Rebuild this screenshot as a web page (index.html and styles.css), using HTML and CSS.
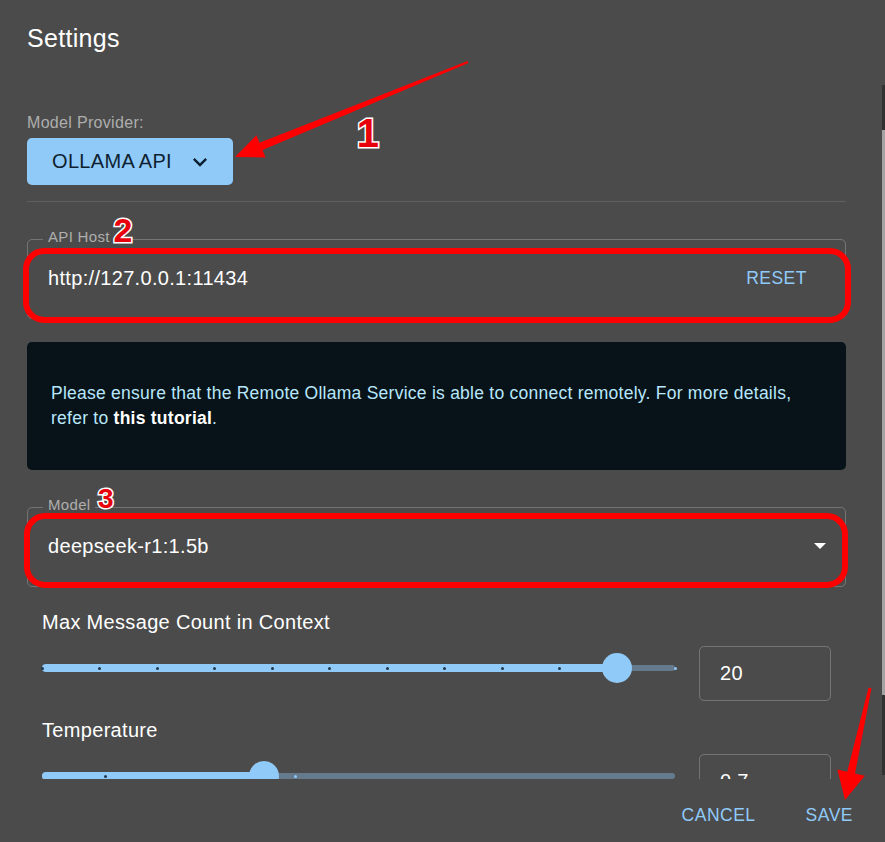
FILE: index.html
```html
<!DOCTYPE html>
<html lang="en">
    <head>
        <meta charset="UTF-8" />
        <meta name="viewport" content="width=device-width, initial-scale=1.0" />
        <title>Settings</title>
        <link rel="stylesheet" href="styles.css">
    </head>
    <body>
        <div class="dialog">
            <h2 class="dialog-title">Settings</h2>

            <div class="dialog-content">
                <!-- Provider picker -->
                <div class="field-caption">Model Provider:</div>
                <button class="provider-btn">
                    <span>OLLAMA API</span>
                    <svg width="28" height="28" viewBox="0 0 24 24"><path d="M16.59 8.59 12 13.17 7.41 8.59 6 10l6 6 6-6z" fill="currentColor"/></svg>
                </button>

                <hr class="divider">

                <fieldset class="outlined">
                    <legend>API Host</legend>
                    <div class="field-inner host-inner">
                        <span class="value">http://127.0.0.1:11434</span>
                        <button class="text-btn">RESET</button>
                    </div>
                </fieldset>

                <div class="alert">
                    <p>Please ensure that the Remote Ollama Service is able to connect remotely. For more details, refer to <b>this tutorial</b>.</p>
                </div>

                <fieldset class="outlined">
                    <legend>Model</legend>
                    <div class="field-inner model-inner">
                        <span class="value">deepseek-r1:1.5b</span>
                        <span class="caret"></span>
                    </div>
                </fieldset>

                <!-- Sliders -->
                <div class="slider-block first">
                    <div class="slider-label">Max Message Count in Context</div>
                    <div class="slider-row">
                        <div class="slider">
                            <div class="rail"></div>
                            <div class="track" style="width: 90.91%"></div>
                            <span class="mark active" style="left: 0%"></span>
                            <span class="mark active" style="left: 9.09%"></span>
                            <span class="mark active" style="left: 18.18%"></span>
                            <span class="mark active" style="left: 27.27%"></span>
                            <span class="mark active" style="left: 36.36%"></span>
                            <span class="mark active" style="left: 45.45%"></span>
                            <span class="mark active" style="left: 54.55%"></span>
                            <span class="mark active" style="left: 63.64%"></span>
                            <span class="mark active" style="left: 72.73%"></span>
                            <span class="mark active" style="left: 81.82%"></span>
                            <span class="mark" style="left: 100%"></span>
                            <div class="thumb" style="left: 90.91%"></div>
                        </div>
                        <div class="num-input">20</div>
                    </div>
                </div>

                <div class="slider-block">
                    <div class="slider-label">Temperature</div>
                    <div class="slider-row">
                        <div class="slider">
                            <div class="rail"></div>
                            <div class="track" style="width: 35%"></div>
                            <span class="mark active" style="left: 10%"></span>
                            <span class="mark" style="left: 40%"></span>
                            <div class="thumb" style="left: 35%"></div>
                        </div>
                        <div class="num-input">0.7</div>
                    </div>
                </div>
            </div>

            <div class="dialog-actions">
                <button class="text-btn">CANCEL</button>
                <button class="text-btn">SAVE</button>
            </div>
        </div>

        <div class="scrollbar"><div class="scroll-thumb"></div></div>

        <!-- red markup drawn over the screenshot -->
        <svg class="annotations" width="885" height="842" viewBox="0 0 885 842">
            <rect x="26" y="251" width="822" height="69" rx="18" fill="none" stroke="#f00" stroke-width="6"/>
            <rect x="27" y="516" width="818" height="69" rx="18" fill="none" stroke="#f00" stroke-width="6"/>
            <polygon points="235,157 256.5,135.3 259.5,142.7 467.6,61 468.4,63 262.5,150.1 265.5,157.5" fill="#f00"/>
            <polygon points="845,800 837.4,769.6 847.2,771.8 868.5,687.7 871.5,688.3 855,773.6 864.8,775.8" fill="#f00"/>
            <text x="368" y="147" text-anchor="middle" class="num" font-size="40">1</text>
            <text x="123" y="242" text-anchor="middle" class="num" font-size="34">2</text>
            <text x="106" y="508" text-anchor="middle" class="num" font-size="28">3</text>
        </svg>
    </body>
</html>
```

FILE: styles.css
```css
body {
    font-family: "Liberation Sans", Arial, sans-serif;
    letter-spacing: 0.02em;
    margin: 0;
    width: 885px;
    height: 842px;
    overflow: hidden;
    position: relative;
    background-color: #4b4b4b;
    color: #fff;
}
.dialog {
    display: flex;
    flex-direction: column;
    height: 842px;
}
.dialog-title {
    margin: 0;
    height: 85px;
    box-sizing: border-box;
    padding: 22px 27px 0;
    font-size: 25px;
    font-weight: normal;
    line-height: 32px;
}
.dialog-content {
    height: 694px;
    overflow: hidden;
    padding: 0 39px 0 27px;
}
.field-caption {
    margin-top: 28px;
    font-size: 16px;
    line-height: 20px;
    color: #aeaeae;
}
.provider-btn {
    margin-top: 5px;
    height: 47px;
    display: inline-flex;
    align-items: center;
    gap: 14px;
    padding: 0 19px 0 25px;
    background-color: #90caf9;
    color: #0e1f30;
    border: none;
    border-radius: 5px;
    font-family: inherit;
    font-size: 20px;
    letter-spacing: inherit;
}
.provider-btn svg {
    display: block;
}
.divider {
    margin: 16px 0 0;
    border: none;
    border-top: 1px solid rgba(255,255,255,0.12);
}
.outlined {
    margin: 26px 0 0;
    padding: 0;
    min-width: 0;
    border: 1px solid rgba(255,255,255,0.23);
    border-radius: 5px;
}
.outlined legend {
    margin-left: 15px;
    padding: 0 5px 4px;
    font-size: 15px;
    line-height: 18px;
    color: #aeaeae;
}
.field-inner {
    display: flex;
    align-items: flex-start;
    height: 68px;
    box-sizing: border-box;
    padding: 16px 28px 0 20px;
}
.model-inner {
    padding-right: 19px;
}
.value {
    flex: 1;
    font-size: 20px;
    line-height: 24px;
}
.text-btn {
    background: none;
    border: none;
    padding: 0 10px;
    color: #90caf9;
    font-family: inherit;
    font-size: 17.5px;
    line-height: 24px;
    letter-spacing: 0.5px;
    cursor: pointer;
}
.caret {
    width: 0;
    height: 0;
    margin-top: 9px;
    border-left: 6.5px solid transparent;
    border-right: 6.5px solid transparent;
    border-top: 6.5px solid #fff;
}
.alert {
    margin-top: 23px;
    height: 128px;
    box-sizing: border-box;
    display: flex;
    align-items: center;
    padding: 0 24px;
    background-color: rgb(7,19,24);
    color: rgb(184,231,251);
    border-radius: 5px;
    font-size: 17.5px;
    line-height: 25px;
    letter-spacing: 0.25px;
}
.alert p {
    margin: 0;
}
.alert b {
    color: #fff;
}
.slider-block {
    padding: 0 15px;
}
.slider-label {
    margin-top: 17px;
    font-size: 20px;
    line-height: 24px;
}
.slider-block.first .slider-label {
    margin-top: 23px;
}
.slider-row {
    display: flex;
    align-items: flex-start;
    gap: 24px;
    margin-top: 12px;
}
.slider {
    flex: 1;
    position: relative;
    height: 30px;
    margin-top: 7px;
}
.rail {
    position: absolute;
    left: 0;
    right: 0;
    top: 12px;
    height: 6px;
    border-radius: 3px;
    background-color: rgba(144,202,249,0.38);
}
.track {
    position: absolute;
    left: 0;
    top: 11px;
    height: 8px;
    border-radius: 4px;
    background-color: #90caf9;
}
.mark {
    position: absolute;
    top: 13.5px;
    width: 3px;
    height: 3px;
    margin-left: -1.5px;
    border-radius: 50%;
    background-color: #90caf9;
}
.mark.active {
    background-color: #22364a;
}
.thumb {
    position: absolute;
    top: 0;
    width: 30px;
    height: 30px;
    margin-left: -15px;
    border-radius: 50%;
    background-color: #90caf9;
}
.num-input {
    width: 132px;
    height: 55px;
    box-sizing: border-box;
    display: flex;
    align-items: center;
    padding: 0 20px;
    border: 1px solid rgba(255,255,255,0.23);
    border-radius: 5px;
    font-size: 20px;
}
.dialog-actions {
    height: 63px;
    box-sizing: border-box;
    display: flex;
    justify-content: flex-end;
    align-items: center;
    gap: 30px;
    padding: 8px 22px 0 0;
}
.scrollbar {
    position: absolute;
    right: 0;
    top: 85px;
    width: 3px;
    height: 690px;
    background-color: #323232;
}
.scroll-thumb {
    margin-top: 45px;
    height: 565px;
    background-color: #a3a3a3;
}
.annotations {
    position: absolute;
    top: 0;
    left: 0;
    pointer-events: none;
}
.annotations .num {
    font-family: "Liberation Sans", Arial, sans-serif;
    font-weight: bold;
    fill: #e8000b;
    stroke: #fff;
    stroke-width: 3px;
    paint-order: stroke;
}
```
